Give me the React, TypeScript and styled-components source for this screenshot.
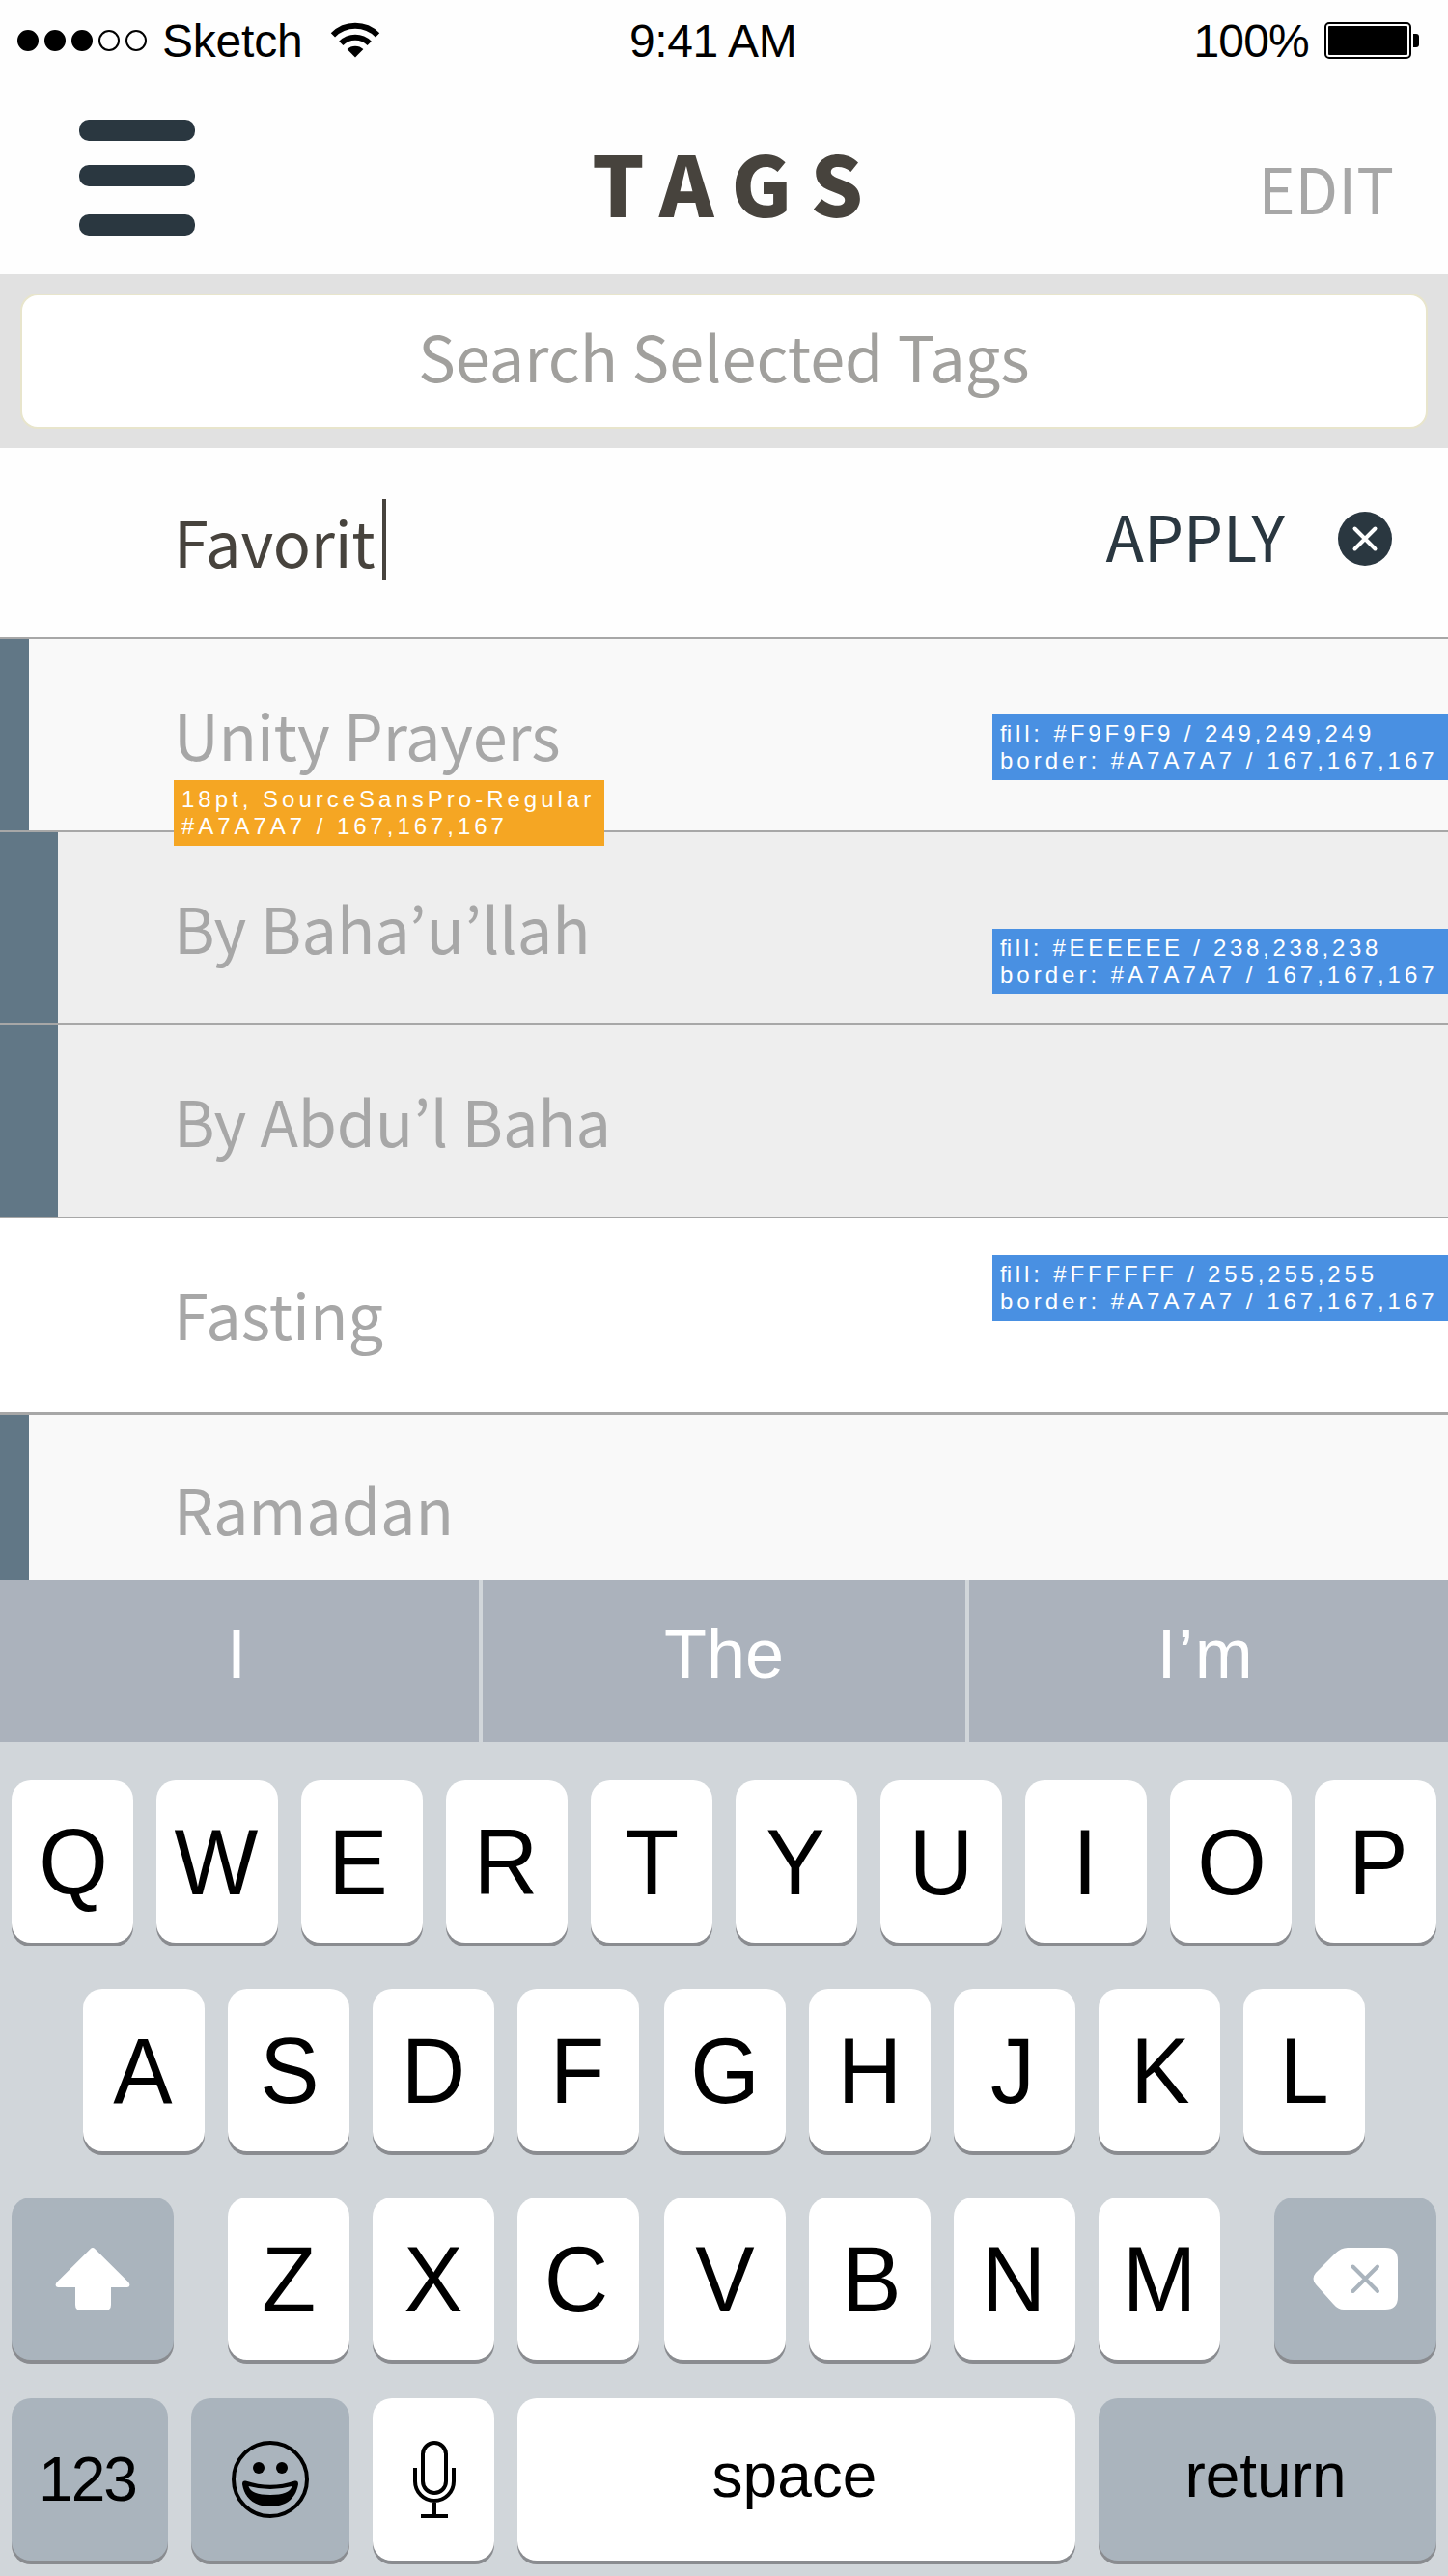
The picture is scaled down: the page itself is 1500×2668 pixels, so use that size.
import React from 'react';
import styled, { createGlobalStyle, css } from 'styled-components';

const SOURCE = '"Source Sans Pro", "Noto Sans CJK KR", sans-serif';
const SYSTEM = '"Liberation Sans", Arial, sans-serif';

const color = {
  ink: '#47433d',
  navy: '#2a3740',
  muted: '#a7a7a7',
  slate: '#617786',
  bar: '#e1e1e1',
  keyDark: '#aab4bd',
  keyboard: '#d1d6da',
  keyShadow: '#8a8c90',
};

const GlobalStyle = createGlobalStyle`
  *, *::before, *::after { box-sizing: border-box; }
  body { margin: 0; background: #fefefe; }
`;

const Screen = styled.main`
  display: flex;
  flex-direction: column;
  width: 1500px;
  height: 2668px;
  overflow: hidden;
  background: #fefefe;
  font-family: ${SOURCE};
`;

/* Status bar */

const StatusBar = styled.div`
  display: grid;
  grid-template-columns: 652px 1fr auto;
  align-items: center;
  height: 82px;
  padding-right: 30px;
  font: 48px/82px ${SYSTEM};
  color: #000;
`;

const Carrier = styled.div`
  display: flex;
  align-items: center;
  padding-left: 18px;
`;

const Signal = styled.div`
  display: flex;
  gap: 6px;
  margin-right: 16px;
`;

const Dot = styled.span<{ $on: boolean }>`
  width: 22px;
  height: 22px;
  border: 2px solid #000;
  border-radius: 50%;
  background: ${(p) => (p.$on ? '#000' : 'transparent')};
`;

const StatusText = styled.span<{ $spacing?: number }>`
  padding-top: 2px;
  letter-spacing: ${(p) => p.$spacing ?? 0}px;
`;

const WifiIcon = styled.svg`
  width: 54px;
  height: 38px;
  margin-left: 27px;
`;

const Battery = styled.div`
  display: flex;
  align-items: center;
`;

const BatteryBody = styled.span`
  width: 90px;
  height: 38px;
  margin-left: 16px;
  padding: 2px;
  border: 2px solid #000;
  border-radius: 5px;

  &::before {
    content: '';
    display: block;
    height: 100%;
    border-radius: 1px;
    background: #000;
  }
`;

const BatteryTip = styled.span`
  width: 6px;
  height: 14px;
  margin-left: 2px;
  border-radius: 0 3px 3px 0;
  background: #000;
`;

/* Header */

const Header = styled.header`
  display: grid;
  grid-template-columns: 531px 1fr auto;
  align-items: center;
  height: 202px;
  padding: 0 56px 0 82px;
`;

const MenuButton = styled.div`
  display: flex;
  flex-direction: column;
  gap: 25px;
  padding-top: 2px;
`;

const MenuBar = styled.span`
  width: 120px;
  height: 22px;
  border-radius: 10px;
  background: ${color.navy};

  &:last-child {
    margin-top: 4px;
  }
`;

const Title = styled.h1`
  margin: 0;
  padding-top: 9px;
  font-size: 85.5px;
  font-weight: 900;
  line-height: 100px;
  letter-spacing: 19.2px;
  color: ${color.ink};
`;

const Edit = styled.span`
  padding-top: 21px;
  font-size: 64.8px;
  line-height: 90px;
  color: ${color.muted};
`;

/* Search */

const SearchBar = styled.div`
  height: 180px;
  padding: 20px 21px;
  background: ${color.bar};
`;

const SearchField = styled.div`
  height: 140px;
  padding-bottom: 12px;
  border: 2px solid #e8e5cc;
  border-radius: 18px;
  background: #fff;
  text-align: center;
  font-size: 64.8px;
  line-height: 124px;
  color: #a1a09d;
`;

/* Tag list */

const NewTag = styled.section`
  display: flex;
  align-items: center;
  height: 196px;
  padding: 0 58px 0 180px;
  font-size: 64.8px;
  line-height: 90px;
`;

const NewTagText = styled.span`
  padding-bottom: 4px;
  letter-spacing: -0.2px;
  color: ${color.ink};
`;

const Caret = styled.span`
  width: 4px;
  height: 84px;
  margin: 0 auto 6px 7px;
  background: ${color.ink};
`;

const Apply = styled.span`
  margin-right: 55px;
  padding-bottom: 16px;
  color: ${color.navy};
`;

const ClearIcon = styled.svg`
  width: 56px;
  height: 56px;
  margin-bottom: 8px;
`;

const TagList = styled.section`
  height: 976px;
  overflow: hidden;
`;

const TagRow = styled.div<{ $fill: string; $depth: number; $height?: number; $rule?: number }>`
  position: relative;
  display: flex;
  height: ${(p) => p.$height ?? 200}px;
  border-top: ${(p) => p.$rule ?? 2}px solid ${color.muted};
  background: ${(p) => p.$fill};

  &::before {
    content: '';
    width: ${(p) => p.$depth * 30}px;
    margin-right: ${(p) => 180 - p.$depth * 30}px;
    background: ${color.slate};
  }
`;

const TagName = styled.span<{ $line?: number; $spacing?: number }>`
  font-size: 64.8px;
  line-height: ${(p) => p.$line ?? 196}px;
  letter-spacing: ${(p) => p.$spacing ?? 0}px;
  color: ${color.muted};
`;

const Note = styled.div<{ $top: number; $kind: 'text' | 'fill' }>`
  position: absolute;
  z-index: 1;
  top: ${(p) => p.$top}px;
  height: 68px;
  font: 24px/28px ${SYSTEM};
  letter-spacing: 4px;
  white-space: nowrap;
  color: #fff;
  ${(p) =>
    p.$kind === 'text'
      ? css`
          left: 180px;
          width: 446px;
          padding: 6px 0 0 8px;
          background: #f5a623;
        `
      : css`
          right: 0;
          width: 472px;
          padding: 6px 0 0 8px;
          background: #4990e2;
        `}
`;

const NoteLine = styled.div<{ $spacing: number }>`
  letter-spacing: ${(p) => p.$spacing}px;
`;

const Tight = styled.span`
  letter-spacing: 0;
`;

/* Keyboard */

const Suggestions = styled.div`
  display: grid;
  grid-template-columns: 496px 500px 496px;
  column-gap: 4px;
  height: 168px;
  background: ${color.keyboard};
  font: 72px/154px ${SYSTEM};
  text-align: center;
  color: #fff;
`;

const Suggestion = styled.span<{ $shift?: number; $spacing?: number }>`
  padding-right: ${(p) => p.$shift ?? 0}px;
  letter-spacing: ${(p) => p.$spacing ?? 0}px;
  background: #abb2bc;
`;

const Keyboard = styled.section`
  display: flex;
  flex-direction: column;
  gap: 48px;
  height: 864px;
  padding: 40px 12px 0;
  background: ${color.keyboard};
`;

const KeyRow = styled.div<{ $indent?: number; $pull?: number }>`
  display: flex;
  gap: 24px;
  margin-top: ${(p) => -(p.$pull ?? 0)}px;
  padding-left: ${(p) => p.$indent ?? 0}px;
`;

const Key = styled.div<{ $width?: number; $dark?: boolean; $before?: number; $raise?: number; $shift?: number }>`
  display: flex;
  flex: none;
  align-items: center;
  justify-content: center;
  width: ${(p) => p.$width ?? 126}px;
  height: 168px;
  margin-left: ${(p) => p.$before ?? 0}px;
  padding-bottom: ${(p) => p.$raise ?? 0}px;
  padding-right: ${(p) => p.$shift ?? 0}px;
  border-radius: 20px;
  background: ${(p) => (p.$dark ? color.keyDark : '#fff')};
  box-shadow: 0 4px 0 ${color.keyShadow};
  font: 64px/74px ${SYSTEM};
  color: #000;
`;

const Letter = styled.span<{ $nudge: number }>`
  font-size: 92px;
  line-height: 92px;
  margin-left: ${(p) => p.$nudge * 2}px;
  padding-top: 3px;
  transform: scaleY(1.04);
  transform-origin: 50% 81px;
`;

const Digits = styled.span`
  letter-spacing: -2px;
`;

const KeyIcon = styled.svg<{ $w: number; $h: number }>`
  width: ${(p) => p.$w}px;
  height: ${(p) => p.$h}px;
`;

const nudges: Record<string, number> = {
  Q: 1, W: -1, E: -4, R: -1, Y: -1, U: 0, I: -1, O: 1, P: 3, A: -1, S: 1, F: -1, J: -2, K: 1, C: -2, B: 2, X: 0, N: -1,
};

const LetterKey = ({ char, before }: { char: string; before?: number }) => (
  <Key $before={before}>
    <Letter $nudge={nudges[char] ?? 0}>{char}</Letter>
  </Key>
);

const FillNote = ({ top, value, spacing = 3.9 }: { top: number; value: string; spacing?: number }) => (
  <Note $top={top} $kind="fill">
    <NoteLine $spacing={spacing}>
      <Tight>f</Tight>ill: {value}
    </NoteLine>
    <NoteLine $spacing={4}>border: #A7A7A7 / 167,167,167</NoteLine>
  </Note>
);

export default function App() {
  return (
    <>
      <GlobalStyle />
      <Screen>
        <StatusBar>
          <Carrier>
            <Signal>
              {[true, true, true, false, false].map((on, i) => (
                <Dot key={i} $on={on} />
              ))}
            </Signal>
            <StatusText $spacing={-0.2}>Sketch</StatusText>
            <WifiIcon viewBox="0 0 54 38" fill="none" stroke="#000" strokeWidth="6">
              <path d="M3.9 13.4A32.6 32.6 0 0 1 50.1 13.4" />
              <path d="M12.3 21.8A20.8 20.8 0 0 1 41.7 21.8" />
              <path d="M27 36.5L18.6 28.1A11.9 11.9 0 0 1 35.4 28.1Z" fill="#000" stroke="none" />
            </WifiIcon>
          </Carrier>
          <StatusText $spacing={-0.4}>9:41 AM</StatusText>
          <Battery>
            <StatusText $spacing={-0.8}>100%</StatusText>
            <BatteryBody />
            <BatteryTip />
          </Battery>
        </StatusBar>

        <Header>
          <MenuButton>
            <MenuBar />
            <MenuBar />
            <MenuBar />
          </MenuButton>
          <Title>TAGS</Title>
          <Edit>EDIT</Edit>
        </Header>

        <SearchBar>
          <SearchField>Search Selected Tags</SearchField>
        </SearchBar>

        <NewTag>
          <NewTagText>Favorit</NewTagText>
          <Caret />
          <Apply>APPLY</Apply>
          <ClearIcon viewBox="0 0 56 56">
            <circle cx="28" cy="28" r="28" fill={color.navy} />
            <path d="M17.500 17.500L38.500 38.500M38.500 17.500L17.500 38.500" stroke="#fff" strokeWidth="4" strokeLinecap="round" />
          </ClearIcon>
        </NewTag>

        <TagList>
          <TagRow $fill="#f9f9f9" $depth={1}>
            <TagName $spacing={-0.15}>Unity Prayers</TagName>
            <FillNote top={78} value="#F9F9F9 / 249,249,249" />
            <Note $top={146} $kind="text">
              <NoteLine $spacing={4}>18pt, SourceSansPro-Regular</NoteLine>
              <NoteLine $spacing={3.95}>#A7A7A7 / 167,167,167</NoteLine>
            </Note>
          </TagRow>
          <TagRow $fill="#eeeeee" $depth={2}>
            <TagName>By Baha’u’llah</TagName>
            <FillNote top={100} value="#EEEEEE / 238,238,238" spacing={3.7} />
          </TagRow>
          <TagRow $fill="#eeeeee" $depth={2}>
            <TagName $spacing={-0.12}>By Abdu’l Baha</TagName>
          </TagRow>
          <TagRow $fill="#ffffff" $depth={0} $height={202}>
            <TagName>Fasting</TagName>
            <FillNote top={38} value="#FFFFFF / 255,255,255" spacing={3.85} />
          </TagRow>
          <TagRow $fill="#f9f9f9" $depth={1} $height={174} $rule={4}>
            <TagName $line={192}>Ramadan</TagName>
          </TagRow>
        </TagList>

        <Suggestions>
          <Suggestion $shift={6}>I</Suggestion>
          <Suggestion>The</Suggestion>
          <Suggestion $shift={6} $spacing={1.6}>I’m</Suggestion>
        </Suggestions>

        <Keyboard>
          <KeyRow>
            {'QWERTYUIOP'.split('').map((c) => (
              <LetterKey key={c} char={c} />
            ))}
          </KeyRow>
          <KeyRow $indent={74}>
            {'ASDFGHJKL'.split('').map((c) => (
              <LetterKey key={c} char={c} before={c === 'G' ? 2 : 0} />
            ))}
          </KeyRow>
          <KeyRow>
            <Key $width={168} $dark>
              <KeyIcon $w={78} $h={66} viewBox="0 0 78 66" fill="#fff">
                <path d="M36.6 2.2Q39 0 41.4 2.2L76.4 37Q79 41 75 42H58V60Q58 66 52 66H27Q21 66 21 60V42H3Q-1 41 1.6 37Z" />
              </KeyIcon>
            </Key>
            {'ZXCVBNM'.split('').map((c) => (
              <LetterKey key={c} char={c} before={c === 'Z' ? 32 : c === 'V' ? 2 : 0} />
            ))}
            <Key $width={168} $dark $before={32}>
              <KeyIcon $w={88} $h={64} viewBox="0 0 88 64">
                <path d="M36 0H75Q88 0 88 13V51Q88 64 75 64H32Q26 64 21 58L3 38Q-2 32 3 26L23 6Q29 0 36 0Z" fill="#fff" />
                <path d="M41.5 19.5L67 45M67 19.5L41.5 45" stroke={color.keyDark} strokeWidth="4" strokeLinecap="round" />
              </KeyIcon>
            </Key>
          </KeyRow>
          <KeyRow $pull={8}>
            <Key $width={162} $dark $shift={5}>
              <Digits>123</Digits>
            </Key>
            <Key $width={164} $dark>
              <KeyIcon $w={80} $h={80} viewBox="0 0 80 80">
                <circle cx="40" cy="40" r="38" fill="none" stroke="#000" strokeWidth="4" />
                <circle cx="28" cy="28" r="6" />
                <circle cx="52" cy="28" r="6" />
                <path
                  fillRule="evenodd"
                  d="M14.5 41.6Q40 50 65.5 41.6Q69 41 69 45C66 62 54 68 40 68C26 68 14 62 11 45Q11 41 14.5 41.6ZM17.5 47Q20 56 40 56Q60 56 62.5 47Q40 53 17.5 47Z"
                />
              </KeyIcon>
            </Key>
            <Key>
              <KeyIcon $w={46} $h={80} viewBox="-2 0 46 80" fill="none" stroke="#000" strokeWidth="4">
                <rect x="10" y="2" width="24" height="52" rx="12" />
                <path d="M2 28V42A20 20 0 0 0 42 42V28M22 62V78M8 78H36" />
              </KeyIcon>
            </Key>
            <Key $width={578} $raise={8} $shift={4}>space</Key>
            <Key $width={350} $dark $raise={8} $shift={4}>return</Key>
          </KeyRow>
        </Keyboard>
      </Screen>
    </>
  );
}
